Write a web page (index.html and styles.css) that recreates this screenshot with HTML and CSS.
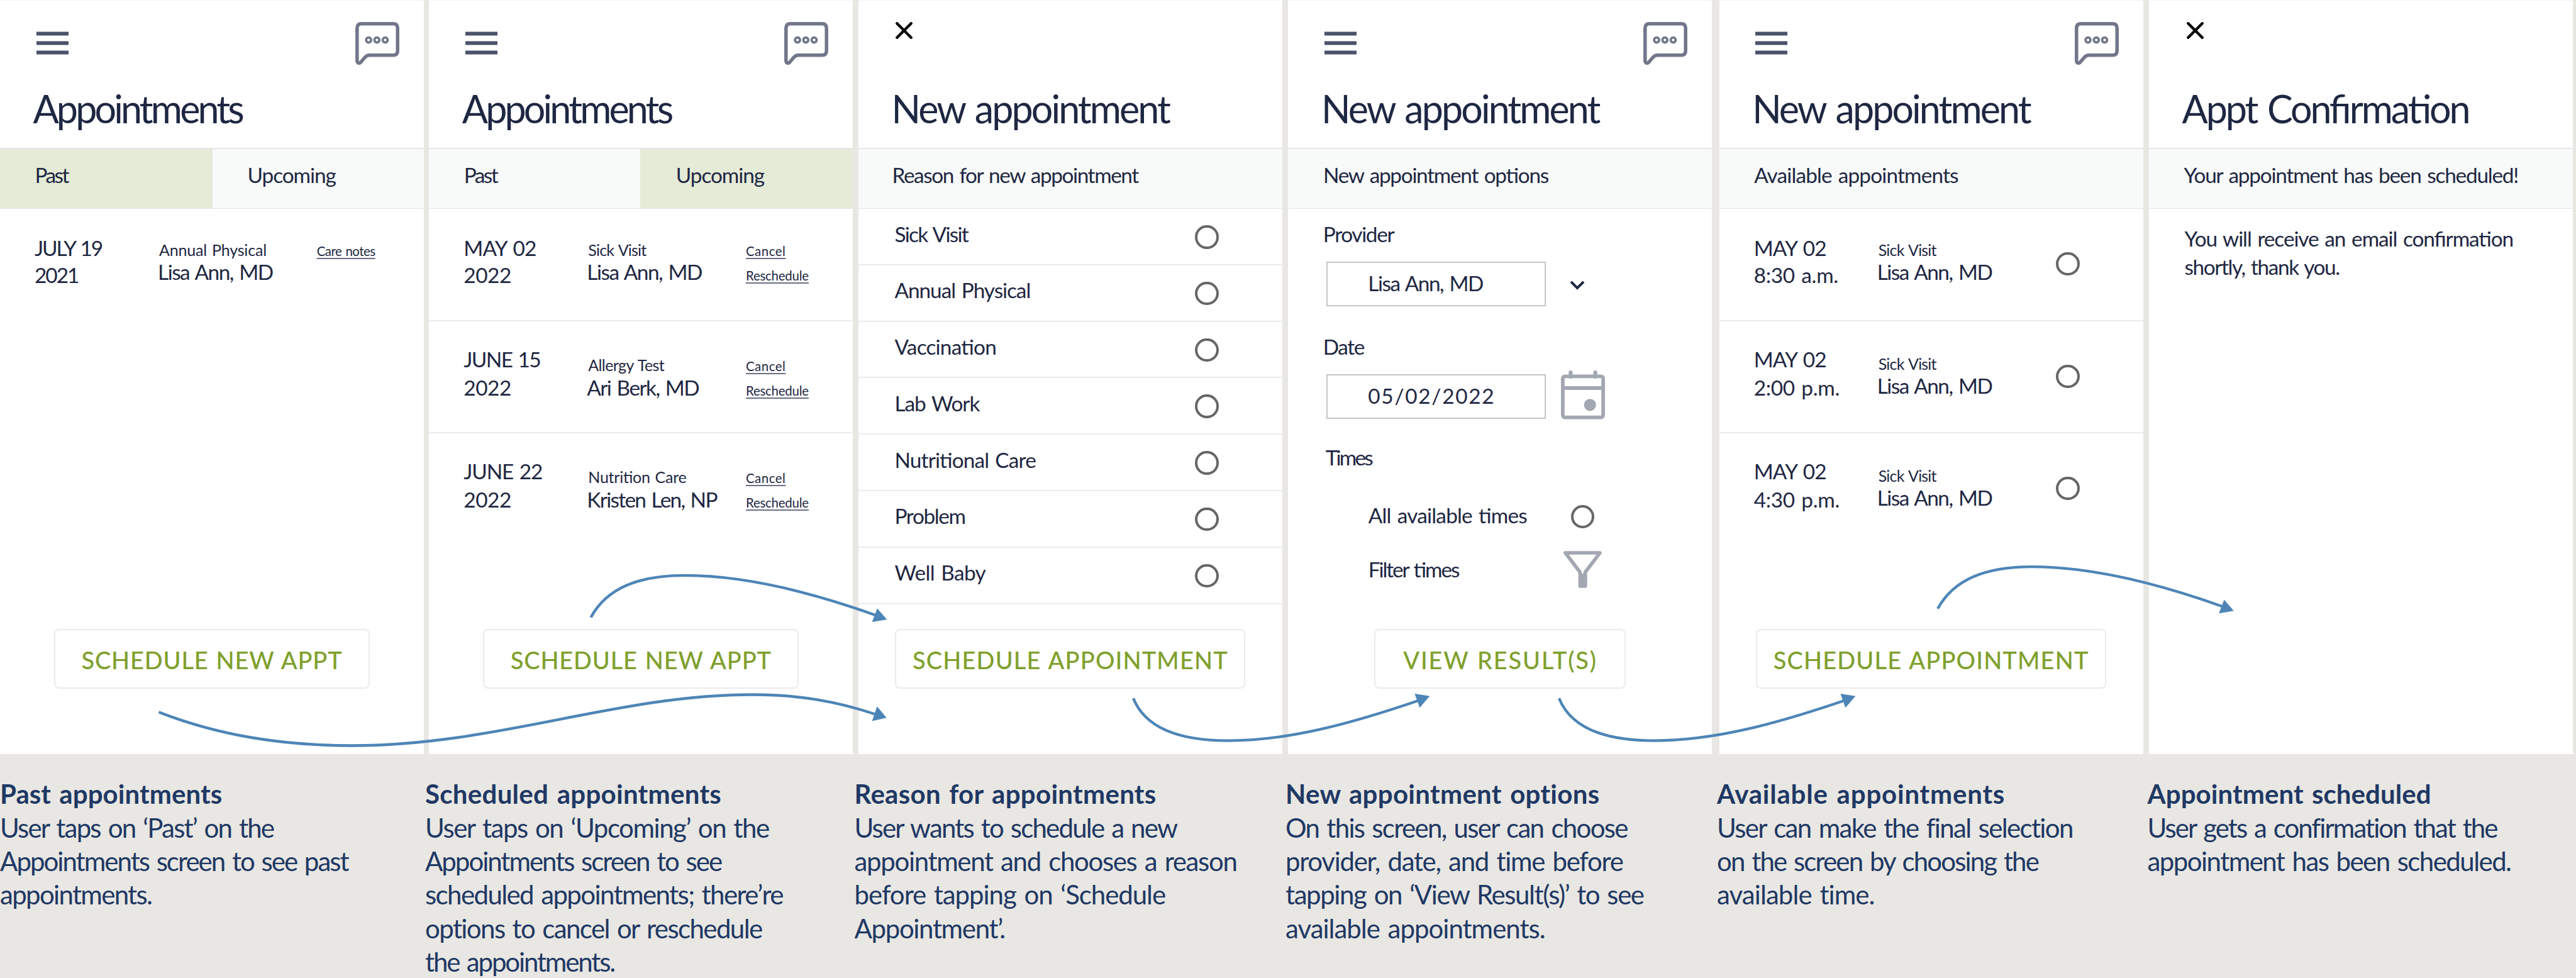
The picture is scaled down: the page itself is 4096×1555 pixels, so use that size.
FILE: index.html
```html
<!DOCTYPE html>
<html lang="en">
<head>
<meta charset="utf-8">
<title>Appointment scheduling flow</title>
<link rel="stylesheet" href="styles.css">
</head>
<body>
<svg class="defs" width="0" height="0" aria-hidden="true">
  <symbol id="menu" viewBox="0 0 51 37">
    <path d="M0 3.5H51M0 18.5H51M0 33.5H51" fill="none" stroke="#4b536b" stroke-width="6.2"/>
  </symbol>
  <symbol id="chat" viewBox="0 0 70 68">
    <g fill="none" stroke="#717689">
      <path stroke-width="5.5" stroke-linejoin="round" d="M2.8 9.8Q2.8 2.8 9.8 2.8H60.2Q67.2 2.8 67.2 9.8V45.7Q67.2 52.7 60.2 52.7H22.5Q18.4 52.7 15.6 55.8L8.6 64Q6.6 66 4.4 65Q2.8 64 2.8 61Z"/>
      <g stroke-width="3.7"><circle cx="21.1" cy="28.6" r="4"/><circle cx="34.3" cy="28.6" r="4"/><circle cx="47.5" cy="28.6" r="4"/></g>
    </g>
  </symbol>
  <symbol id="close" viewBox="0 0 27 27">
    <path d="M2.3 2.3L24.7 24.7M24.7 2.3L2.3 24.7" fill="none" stroke="#000" stroke-width="4.4" stroke-linecap="round"/>
  </symbol>
  <symbol id="chevron" viewBox="0 0 24 15">
    <path d="M2 2L12 12L22 2" fill="none" stroke="#1e2742" stroke-width="4"/>
  </symbol>
  <symbol id="calendar" viewBox="0 0 70 78">
    <rect x="2.9" y="9.4" width="64.2" height="65.2" rx="3.5" fill="none" stroke="#a3a7b2" stroke-width="5.8"/>
    <path d="M3 28H67" stroke="#a3a7b2" stroke-width="6"/>
    <path d="M15.4 10V3.2M54.6 10V3.2" stroke="#a3a7b2" stroke-width="6.2" stroke-linecap="round"/>
    <circle cx="46.2" cy="54.8" r="9.6" fill="#a3a7b2"/>
  </symbol>
  <symbol id="funnel" viewBox="0 0 61 61">
    <path d="M3 3H58L34.5 34V56H26.5V34Z" fill="none" stroke="#a3a7b2" stroke-width="5.6" stroke-linejoin="round"/>
    <path d="M24 36H37.5V56H24Z" fill="#a3a7b2"/>
  </symbol>
</svg>

<main class="board">
  <section class="screens">

    <article class="screen">
      <header class="header">
        <div class="toolbar"><svg class="menu"><use href="#menu"/></svg><svg class="chat"><use href="#chat"/></svg></div>
        <h1 class="title ls-63">Appointments</h1>
      </header>
      <nav class="band tabs tabs--past"><span class="tab tab--active ls-76">Past</span><span class="tab ls-32">Upcoming</span></nav>
      <div class="slot slot--first">
        <p class="date"><span class="ls-63">JULY 19</span><br><span class="ls-60">2021</span></p>
        <p class="visit"><span class="kind ls-7">Annual Physical</span><span class="name ls-45">Lisa Ann, MD</span></p>
        <p class="links"><a class="ls-24">Care notes</a></p>
      </div>
      <button class="action action--new">SCHEDULE NEW APPT</button>
    </article>

    <article class="screen">
      <header class="header">
        <div class="toolbar"><svg class="menu"><use href="#menu"/></svg><svg class="chat"><use href="#chat"/></svg></div>
        <h1 class="title ls-63">Appointments</h1>
      </header>
      <nav class="band tabs tabs--upcoming"><span class="tab ls-76">Past</span><span class="tab tab--active ls-32">Upcoming</span></nav>
      <div class="slot slot--first">
        <p class="date"><span class="date__may ls-26">MAY 02</span><br><span class="ls-14">2022</span></p>
        <p class="visit"><span class="kind ls-32">Sick Visit</span><span class="name ls-45">Lisa Ann, MD</span></p>
        <p class="links"><a class="ls25">Cancel</a><a class="ls-10">Reschedule</a></p>
      </div>
      <div class="slot">
        <p class="date"><span class="ls-48">JUNE 15</span><br><span class="ls-14">2022</span></p>
        <p class="visit"><span class="kind ls-24">Allergy Test</span><span class="name ls-47">Ari Berk, MD</span></p>
        <p class="links"><a class="ls25">Cancel</a><a class="ls-10">Reschedule</a></p>
      </div>
      <div class="slot slot--last">
        <p class="date"><span class="ls-35">JUNE 22</span><br><span class="ls-14">2022</span></p>
        <p class="visit"><span class="kind ls-10">Nutrition Care</span><span class="name ls-51">Kristen Len, NP</span></p>
        <p class="links"><a class="ls25">Cancel</a><a class="ls-10">Reschedule</a></p>
      </div>
      <button class="action action--new">SCHEDULE NEW APPT</button>
    </article>

    <article class="screen">
      <header class="header">
        <div class="toolbar"><svg class="close"><use href="#close"/></svg></div>
        <h1 class="title ls-48">New appointment</h1>
      </header>
      <p class="band band--text band--reason ls-43">Reason for new appointment</p>
      <ul class="reasons">
        <li class="reason"><span class="ls-51">Sick Visit</span><i class="radio"></i></li>
        <li class="reason"><span class="ls-32">Annual Physical</span><i class="radio"></i></li>
        <li class="reason"><span class="ls-24">Vaccination</span><i class="radio"></i></li>
        <li class="reason"><span class="ls-33">Lab Work</span><i class="radio"></i></li>
        <li class="reason"><span class="ls-26">Nutritional Care</span><i class="radio"></i></li>
        <li class="reason"><span class="ls-41">Problem</span><i class="radio"></i></li>
        <li class="reason"><span class="ls-19">Well Baby</span><i class="radio"></i></li>
      </ul>
      <button class="action action--appointment">SCHEDULE APPOINTMENT</button>
    </article>

    <article class="screen">
      <header class="header">
        <div class="toolbar"><svg class="menu"><use href="#menu"/></svg><svg class="chat"><use href="#chat"/></svg></div>
        <h1 class="title ls-48">New appointment</h1>
      </header>
      <p class="band band--text ls-39">New appointment options</p>
      <div class="form">
        <label class="label ls-41">Provider</label>
        <div class="field"><span class="input ls-45">Lisa Ann, MD</span><svg class="chevron"><use href="#chevron"/></svg></div>
        <label class="label label--date ls-43">Date</label>
        <div class="field"><span class="input ls51">05/02/2022</span><svg class="calendar"><use href="#calendar"/></svg></div>
        <label class="label label--times ls-84">Times</label>
        <div class="option"><span class="ls-24">All available times</span><i class="radio"></i></div>
        <div class="option option--filter"><span class="ls-63">Filter times</span><svg class="funnel"><use href="#funnel"/></svg></div>
      </div>
      <button class="action action--results">VIEW RESULT(S)</button>
    </article>

    <article class="screen">
      <header class="header">
        <div class="toolbar"><svg class="menu"><use href="#menu"/></svg><svg class="chat"><use href="#chat"/></svg></div>
        <h1 class="title ls-48">New appointment</h1>
      </header>
      <p class="band band--text ls-26">Available appointments</p>
      <div class="slot slot--first">
        <p class="date"><span class="ls-26">MAY 02</span><br><span class="ls-10">8:30 a.m.</span></p>
        <p class="visit"><span class="kind ls-32">Sick Visit</span><span class="name ls-45">Lisa Ann, MD</span></p>
        <i class="radio"></i>
      </div>
      <div class="slot slot--open">
        <p class="date"><span class="ls-26">MAY 02</span><br><span class="ls-10">2:00 p.m.</span></p>
        <p class="visit"><span class="kind ls-32">Sick Visit</span><span class="name ls-45">Lisa Ann, MD</span></p>
        <i class="radio"></i>
      </div>
      <div class="slot slot--open slot--last">
        <p class="date"><span class="ls-26">MAY 02</span><br><span class="ls-10">4:30 p.m.</span></p>
        <p class="visit"><span class="kind ls-32">Sick Visit</span><span class="name ls-45">Lisa Ann, MD</span></p>
        <i class="radio"></i>
      </div>
      <button class="action action--appointment">SCHEDULE APPOINTMENT</button>
    </article>

    <article class="screen">
      <header class="header">
        <div class="toolbar"><svg class="close close--end"><use href="#close"/></svg></div>
        <h1 class="title ls-51">Appt Confirmation</h1>
      </header>
      <p class="band band--text ls-37">Your appointment has been scheduled!</p>
      <p class="message"><span class="ls-33">You will receive an email confirmation</span><br><span class="ls-43">shortly, thank you.</span></p>
    </article>
  </section>

  <section class="captions">
    <div class="caption"><h2 class="caption__title ls2">Past appointments</h2><p><span class="ls-43">User taps on ‘Past’ on the</span><br><span class="ls-47">Appointments screen to see past</span><br><span class="ls-40">appointments.</span></p></div>
    <div class="caption"><h2 class="caption__title ls7">Scheduled appointments</h2><p><span class="ls-35">User taps on ‘Upcoming’ on the</span><br><span class="ls-48">Appointments screen to see</span><br><span class="ls-38">scheduled appointments; there’re</span><br><span class="ls-38">options to cancel or reschedule</span><br><span class="ls-51">the appointments.</span></p></div>
    <div class="caption"><h2 class="caption__title ls7">Reason for appointments</h2><p><span class="ls-43">User wants to schedule a new</span><br><span class="ls-32">appointment and chooses a reason</span><br><span class="ls-25">before tapping on ‘Schedule</span><br><span class="ls-32">Appointment’.</span></p></div>
    <div class="caption"><h2 class="caption__title ls7">New appointment options</h2><p><span class="ls-40">On this screen, user can choose</span><br><span class="ls-31">provider, date, and time before</span><br><span class="ls-34">tapping on ‘View Result(s)’ to see</span><br><span class="ls-24">available appointments.</span></p></div>
    <div class="caption"><h2 class="caption__title ls19">Available appointments</h2><p><span class="ls-39">User can make the final selection</span><br><span class="ls-45">on the screen by choosing the</span><br><span class="ls-22">available time.</span></p></div>
    <div class="caption"><h2 class="caption__title ls2">Appointment scheduled</h2><p><span class="ls-46">User gets a confirmation that the</span><br><span class="ls-37">appointment has been scheduled.</span></p></div>
  </section>

  <svg class="flow" viewBox="0 0 4096 1555">
    <defs>
      <g id="flow-over">
        <path class="flow__line" d="M939.5 981.6C965 935 1015 914.9 1089 914.9C1180 914.9 1280 938 1392 978"/>
        <path class="flow__head" d="M1410.3 985L1394.9 967.4L1386.6 989Z"/>
      </g>
      <g id="flow-under">
        <path class="flow__line" d="M1802 1110.2C1820 1155 1870 1177.6 1953 1177.6C2050 1177.6 2150 1150 2258 1113"/>
        <path class="flow__head" d="M2273.4 1106.8L2249.4 1103L2257.4 1125.2Z"/>
      </g>
    </defs>
    <path class="flow__line" d="M252.6 1132.3C350 1170 450 1185.5 560 1185.5C790 1185.5 980 1104.5 1196 1104.5C1270 1104.5 1330 1115 1393 1136"/>
    <path class="flow__head" d="M1409.7 1141.3L1394.6 1123.3L1386.6 1146.5Z"/>
    <use href="#flow-over"/>
    <use href="#flow-under"/>
    <use href="#flow-under" x="677"/>
    <use href="#flow-over" x="2141.6" y="-13.8"/>
  </svg>
</main>
</body>
</html>
```
FILE: styles.css
```css
* { box-sizing: border-box; margin: 0; padding: 0; }

body {
  background: #e8e7e3;
  font-family: Lato, "Liberation Sans", sans-serif;
  font-size: 33.4px;
  line-height: 40px;
  color: #1e2742;
  overflow: hidden;
}

.defs { display: block; height: 0; }

.board { position: relative; width: 4096px; height: 1555px; overflow: hidden; }

/* Screens */
.screens {
  display: grid;
  grid-template-columns: 682.3px 682.7px 683.5px 685.2px 683.4px 678.9px;
  height: 1199px;
}

.screen {
  display: flex;
  flex-direction: column;
  width: 674px;
  background: #fff;
  border-top: 1px solid #f3f4f4;
  white-space: nowrap;
  font-feature-settings: "liga" 1;
}

.title, .band, .slot span, .links a, .reason, .form, .message span, .caption p span, .caption__title { word-spacing: 0.07em; }

.header { height: 234px; flex: none; }

.toolbar {
  display: flex;
  justify-content: space-between;
  align-items: flex-start;
  height: 136px;
  padding: 34px 39px 0 57.5px;
}

.menu { width: 51px; height: 37px; margin-top: 15px; }
.chat { width: 70px; height: 68px; }
.close { width: 27px; height: 27px; margin-left: 2px; }
.close--end { margin-left: 2.5px; }

.title {
  padding-left: 52.5px;
  font-size: 61px;
  line-height: 72px;
  font-weight: 400;
}

.band {
  flex: none;
  height: 97px;
  border-top: 2px solid #e4e6e5;
  border-bottom: 1.6px solid #e2e5e4;
  background: #f8faf9;
}

.band--text { padding: 21px 0 0 55.5px; }
.band--reason { padding-left: 53.5px; }

.tabs { display: grid; }
.tabs--past { grid-template-columns: 338px 1fr; }
.tabs--upcoming { grid-template-columns: 336px 1fr; }
.tab { padding: 21px 0 0 55.5px; }
.tabs--upcoming .tab--active { padding-left: 56.5px; }
.tab--active { background: #e5ebd7; }

/* Appointment rows */
.slot {
  --date-top: 38.2px;
  --date-line: 44.7px;
  --visit-top: 54.4px;
  display: grid;
  grid-template-columns: 251px 252.7px 1fr;
  flex: none;
  height: 178px;
  border-bottom: 2px solid #ececec;
}

.slot--first { --date-top: 41px; --date-line: 42.8px; --visit-top: 49.8px; height: 179px; }
.slot--open { --visit-top: 51.5px; }
.slot--last { border-bottom: 0; }
.slot:only-of-type { border-bottom: 0; }

.date { padding: var(--date-top) 0 0 55px; line-height: var(--date-line); }

.visit { display: flex; flex-direction: column; padding-top: var(--visit-top); }
.kind { padding-left: 2px; font-size: 25px; line-height: 30.6px; }

.links {
  display: flex;
  flex-direction: column;
  align-items: flex-start;
  gap: 15.2px;
  padding-top: calc(var(--visit-top) + 4.8px);
  font-size: 20.4px;
  line-height: 24px;
}

.links a {
  text-decoration: underline;
  text-decoration-color: #6a6f86;
  text-decoration-thickness: 2px;
  text-underline-offset: 2.6px;
  text-decoration-skip-ink: none;
}

.radio {
  display: block;
  width: 37.5px;
  height: 37.5px;
  border: 4px solid #666;
  border-radius: 50%;
}

.slot .radio { margin: 68.8px 0 0 31.8px; }

/* Visit reasons */
.reasons { list-style: none; }

.reason {
  display: flex;
  justify-content: space-between;
  height: 89.8px;
  padding: 19.5px 101px 0 57.5px;
  border-bottom: 2px solid #ececec;
}

.reason .radio { margin-top: 6.5px; }

/* Appointment options */
.form { padding: 19.5px 0 0 60.3px; }
.label { display: block; margin-left: -5px; }
.label--date { margin-top: 44px; }
.label--times { margin-top: 41px; margin-left: -1px; }

.field { display: flex; height: 71px; margin-top: 24.3px; }
.label--date + .field { margin-top: 24.3px; }

.input {
  width: 349.5px;
  padding: 11.8px 0 0 64.5px;
  border: 2px solid #c6c6c6;
}

.chevron { width: 24px; height: 15px; margin: 30.5px 0 0 38px; }
.calendar { width: 70px; height: 78px; margin: -6.4px 0 0 24px; }

.option { display: flex; justify-content: space-between; width: 428px; margin-top: 51.8px; padding-left: 67px; }
.option .radio { margin: 3.9px 1.5px 0 0; }
.option--filter { margin-top: 45px; height: 40px; }
.option--filter .funnel { width: 61px; height: 61px; margin: -9px -10px 0 0; }

/* Primary buttons */
.action {
  align-self: center;
  height: 95px;
  margin-top: auto;
  margin-bottom: 104px;
  padding-top: 2px;
  border: 2px solid #ebebeb;
  border-radius: 8px;
  background: #fff;
  color: #80a02d;
  font-family: inherit;
  font-size: 38px;
  font-weight: 500;
  word-spacing: 0.04em;
}

.action--new { width: 502px; letter-spacing: 0.022em; }
.action--appointment { width: 557px; letter-spacing: 0.03em; }
.action--results { width: 400px; letter-spacing: 0.048em; }

.message { padding: 24.5px 0 0 56.5px; line-height: 45.3px; }

/* Captions */
.captions {
  display: grid;
  grid-template-columns: 676px 682.5px 685.5px 686px 684.5px 1fr;
  padding-top: 37.2px;
  font-size: 42px;
  line-height: 53.4px;
  color: #1f3864;
  white-space: nowrap;
}

.caption__title { font-size: inherit; line-height: inherit; font-weight: 700; }

/* Arrows that link the screens */
.flow { position: absolute; inset: 0; width: 4096px; height: 1555px; pointer-events: none; }
.flow__line { fill: none; stroke: #4d85b7; stroke-width: 4.4; }
.flow__head { fill: #4d85b7; }

/* Tracking, in thousandths of an em */
.ls-84 { letter-spacing: -0.084em; }
.ls-76 { letter-spacing: -0.076em; }
.ls-63 { letter-spacing: -0.063em; }
.ls-60 { letter-spacing: -0.06em; }
.ls-51 { letter-spacing: -0.051em; }
.ls-48 { letter-spacing: -0.048em; }
.ls-47 { letter-spacing: -0.047em; }
.ls-46 { letter-spacing: -0.046em; }
.ls-45 { letter-spacing: -0.045em; }
.ls-43 { letter-spacing: -0.043em; }
.ls-41 { letter-spacing: -0.041em; }
.ls-40 { letter-spacing: -0.04em; }
.ls-39 { letter-spacing: -0.039em; }
.ls-38 { letter-spacing: -0.038em; }
.ls-37 { letter-spacing: -0.037em; }
.ls-35 { letter-spacing: -0.035em; }
.ls-34 { letter-spacing: -0.034em; }
.ls-33 { letter-spacing: -0.033em; }
.ls-32 { letter-spacing: -0.032em; }
.ls-31 { letter-spacing: -0.031em; }
.ls-26 { letter-spacing: -0.026em; }
.ls-25 { letter-spacing: -0.025em; }
.ls-24 { letter-spacing: -0.024em; }
.ls-22 { letter-spacing: -0.022em; }
.ls-19 { letter-spacing: -0.019em; }
.ls-14 { letter-spacing: -0.014em; }
.ls-10 { letter-spacing: -0.01em; }
.ls-7 { letter-spacing: -0.007em; }
.ls2 { letter-spacing: 0.002em; }
.ls7 { letter-spacing: 0.007em; }
.ls19 { letter-spacing: 0.019em; }
.ls25 { letter-spacing: 0.025em; }
.ls51 { letter-spacing: 0.051em; }
```
